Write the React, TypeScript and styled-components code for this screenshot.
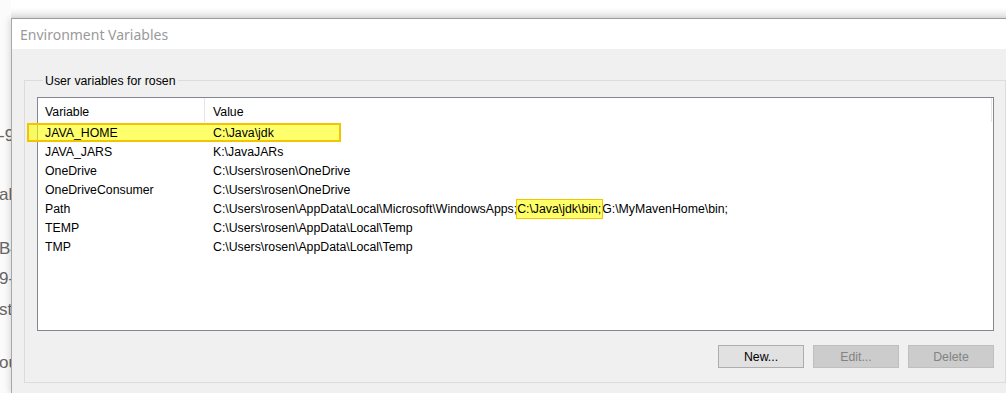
import * as React from 'react';
import styled, {createGlobalStyle} from 'styled-components';

const GlobalStyle = createGlobalStyle`
  html, body {
    margin: 0;
    padding: 0;
    background: #ffffff;
  }
`;

const UI_FONT = `"Liberation Sans", "Noto Sans", Arial, sans-serif`;

const Screen = styled.div`
  width: 1006px;
  height: 393px;
  display: flex;
  overflow: hidden;
  background: linear-gradient(to bottom, #ffffff 0px, #ffffff 8px, #e6e6e6 18px, #ffffff 18px);
  font-family: ${UI_FONT};
`;

const Behind = styled.div`
  width: 11px;
  flex-shrink: 0;
  overflow: hidden;
  display: flex;
  flex-direction: column;
  padding-top: 126px;
  background: #fbfbfb;
`;

const BehindLine = styled.span<{$gap: number}>`
  display: block;
  margin-top: ${(p) => p.$gap}px;
  margin-left: -1px;
  font-size: 17px;
  line-height: 20px;
  color: #666666;
  white-space: nowrap;
`;

const Dialog = styled.div`
  margin-top: 18px;
  width: 1030px;
  flex-shrink: 0;
  display: flex;
  flex-direction: column;
  background: #f0f0f0;
  border-top: 1px solid #9c9c9c;
  border-left: 1px solid #a8a8a8;
  box-shadow: -2px 0 6px rgba(0, 0, 0, 0.12);
`;

const TitleBar = styled.div`
  height: 30px;
  background: #ffffff;
  display: flex;
  align-items: center;
  justify-content: space-between;
  padding: 0 22px 0 8px;
`;

const Title = styled.span`
  font-size: 14px;
  color: #9a9a9a;
  font-family: "Noto Sans", "Liberation Sans", sans-serif;
  padding-top: 1px;
`;

const Body = styled.div`
  padding: 23px 12px 0 12px;
`;

const GroupBox = styled.fieldset`
  width: 982px;
  box-sizing: border-box;
  margin: 0;
  padding: 8px 11px 14px 12px;
  border: 1px solid #dcdcdc;
  display: flex;
  flex-direction: column;
  gap: 14px;
`;

const Legend = styled.legend`
  margin-left: 6px;
  padding: 1px 2px 0;
  font-size: 12.3px;
  line-height: 16px;
  color: #000000;
`;

const ListView = styled.div`
  height: 234px;
  box-sizing: border-box;
  border: 1px solid #828790;
  background: #ffffff;
  display: flex;
  flex-direction: column;
`;

const HeaderRow = styled.div`
  display: grid;
  grid-template-columns: 168px 1fr;
  height: 24px;
`;

const HeaderCell = styled.div`
  padding-left: 7px;
  padding-top: 4px;
  font-size: 12.3px;
  line-height: 20px;
  color: #000000;
  border-right: 1px solid #e5e5e5;
  margin-right: 1px;
`;

const Row = styled.div`
  position: relative;
  display: grid;
  grid-template-columns: 168px 1fr;
  height: 19px;
`;

const Cell = styled.div`
  padding-left: 7px;
  padding-top: 4px;
  font-size: 12.3px;
  line-height: 15px;
  color: #000000;
  white-space: nowrap;
  position: relative;
  z-index: 1;
`;

const Marker = styled.div`
  position: absolute;
  left: -11px;
  top: 1px;
  width: 314px;
  height: 19px;
  box-sizing: border-box;
  background: rgba(255, 255, 0, 0.58);
  border: 2px solid #f5c400;
  z-index: 0;
`;

const Mark = styled.span`
  background: rgba(255, 255, 0, 0.6);
  outline: 1.5px solid #f5c400;
  padding: 2px 1px 2px 0;
`;

const ButtonRow = styled.div`
  display: flex;
  justify-content: flex-end;
  gap: 9px;
`;

const Button = styled.button<{$disabled?: boolean}>`
  width: 86px;
  height: 23px;
  box-sizing: border-box;
  padding: 0;
  font-family: ${UI_FONT};
  font-size: 12.3px;
  background: ${(p) => (p.$disabled ? '#cccccc' : '#e1e1e1')};
  border: 1px solid ${(p) => (p.$disabled ? '#bfbfbf' : '#adadad')};
  color: ${(p) => (p.$disabled ? '#838383' : '#000000')};
  border-radius: 0;
`;

const CloseIcon = () => (
  <svg width="11" height="11" viewBox="0 0 11 11">
    <path d="M0.5 0.5 L10.5 10.5 M10.5 0.5 L0.5 10.5" stroke="#8a8a8a" strokeWidth="1" />
  </svg>
);

type Variable = {name: string; value: React.ReactNode; marked?: boolean};

const variables: Variable[] = [
  {name: 'JAVA_HOME', value: 'C:\\Java\\jdk', marked: true},
  {name: 'JAVA_JARS', value: 'K:\\JavaJARs'},
  {name: 'OneDrive', value: 'C:\\Users\\rosen\\OneDrive'},
  {name: 'OneDriveConsumer', value: 'C:\\Users\\rosen\\OneDrive'},
  {
    name: 'Path',
    value: (
      <>
        C:\Users\rosen\AppData\Local\Microsoft\WindowsApps;<Mark>C:\Java\jdk\bin;</Mark>G:\MyMavenHome\bin;
      </>
    ),
  },
  {name: 'TEMP', value: 'C:\\Users\\rosen\\AppData\\Local\\Temp'},
  {name: 'TMP', value: 'C:\\Users\\rosen\\AppData\\Local\\Temp'},
];

const behindText = [
  {text: '-9', gap: 0},
  {text: 'al', gap: 39},
  {text: 'B4', gap: 34},
  {text: '9-', gap: 10},
  {text: 'st', gap: 11},
  {text: 'ou', gap: 33},
];

export default function App() {
  return (
    <>
      <GlobalStyle />
      <Screen>
        <Behind>
          {behindText.map((b) => (
            <BehindLine key={b.text} $gap={b.gap}>
              {b.text}
            </BehindLine>
          ))}
        </Behind>
        <Dialog>
          <TitleBar>
            <Title>Environment Variables</Title>
            <CloseIcon />
          </TitleBar>
          <Body>
            <GroupBox>
              <Legend>User variables for rosen</Legend>
              <ListView>
                <HeaderRow>
                  <HeaderCell>Variable</HeaderCell>
                  <HeaderCell>Value</HeaderCell>
                </HeaderRow>
                {variables.map((v) => (
                  <Row key={v.name}>
                    {v.marked && <Marker />}
                    <Cell>{v.name}</Cell>
                    <Cell>{v.value}</Cell>
                  </Row>
                ))}
              </ListView>
              <ButtonRow>
                <Button>New...</Button>
                <Button $disabled disabled>Edit...</Button>
                <Button $disabled disabled>Delete</Button>
              </ButtonRow>
            </GroupBox>
          </Body>
        </Dialog>
      </Screen>
    </>
  );
}
